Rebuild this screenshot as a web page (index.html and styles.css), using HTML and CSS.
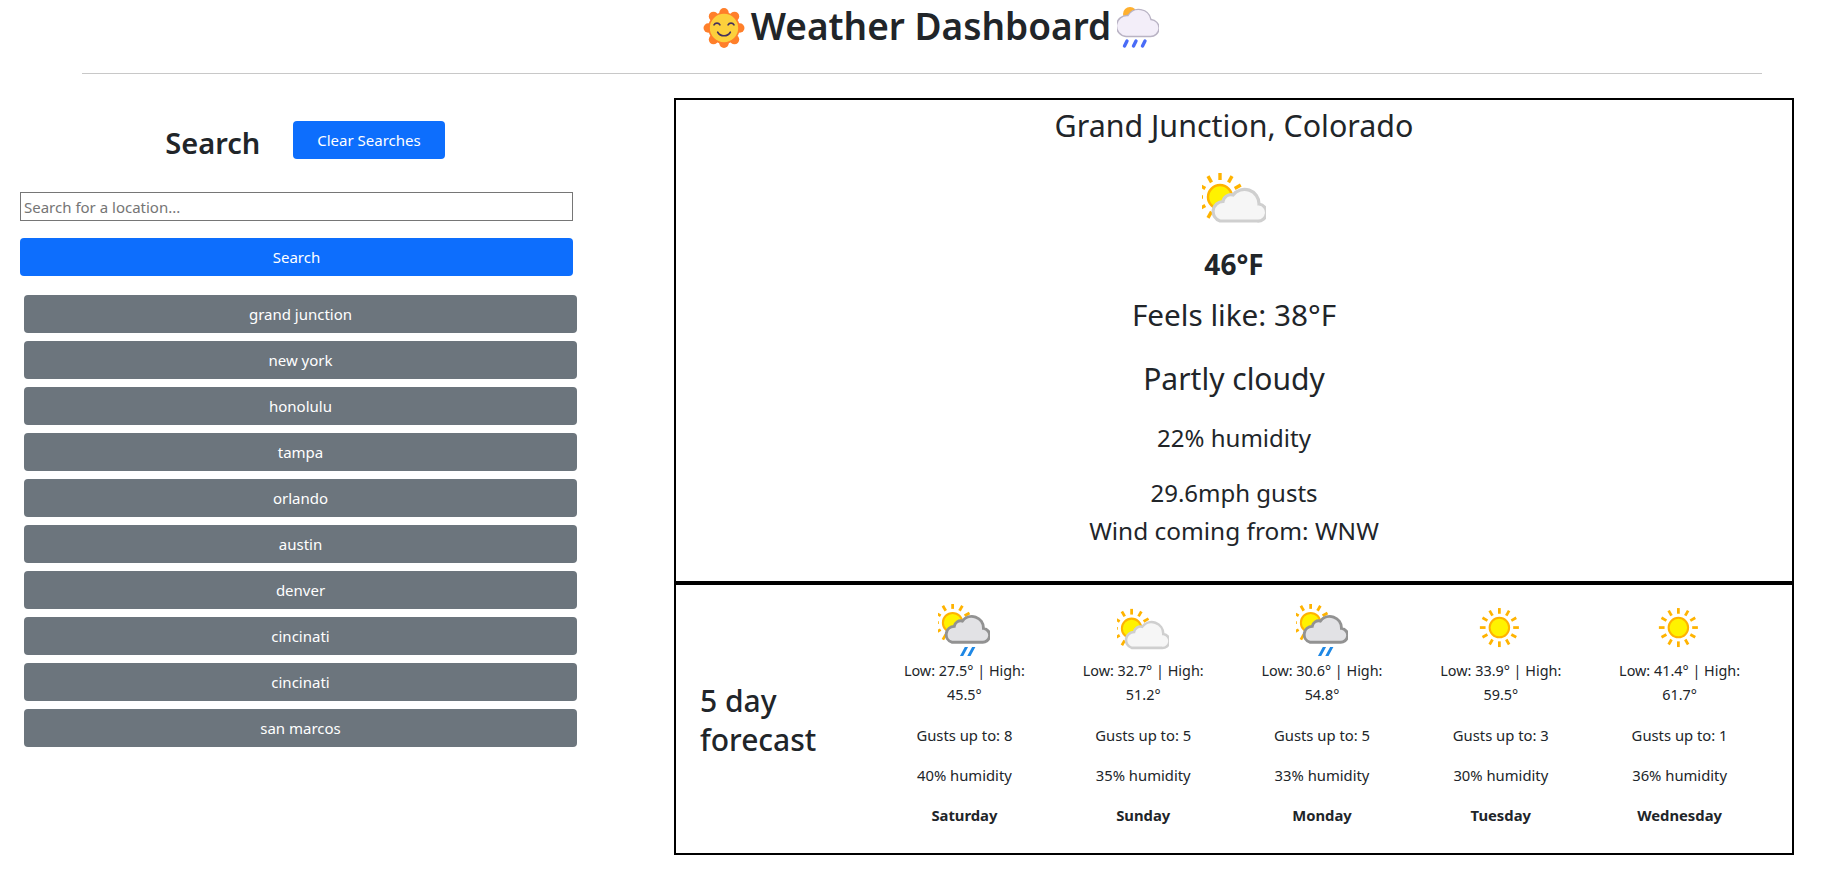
FILE: index.html
```html
<!DOCTYPE html>
<html lang="en">
<head>
	<meta charset="UTF-8">
	<title>Weather Dashboard</title>
	<link rel="stylesheet" href="styles.css">
</head>
<body>
	<!-- icons used more than once -->
	<svg class="defs" width="0" height="0">
		<defs>
			<g id="rays" stroke="#ffb300" stroke-width="3.4" stroke-linecap="butt">
				<line x1="0" y1="-17" x2="0" y2="-24"/>
				<line x1="0" y1="-17" x2="0" y2="-24" transform="rotate(30)"/>
				<line x1="0" y1="-17" x2="0" y2="-24" transform="rotate(60)"/>
				<line x1="0" y1="-17" x2="0" y2="-24" transform="rotate(90)"/>
				<line x1="0" y1="-17" x2="0" y2="-24" transform="rotate(120)"/>
				<line x1="0" y1="-17" x2="0" y2="-24" transform="rotate(150)"/>
				<line x1="0" y1="-17" x2="0" y2="-24" transform="rotate(180)"/>
				<line x1="0" y1="-17" x2="0" y2="-24" transform="rotate(210)"/>
				<line x1="0" y1="-17" x2="0" y2="-24" transform="rotate(240)"/>
				<line x1="0" y1="-17" x2="0" y2="-24" transform="rotate(270)"/>
				<line x1="0" y1="-17" x2="0" y2="-24" transform="rotate(300)"/>
				<line x1="0" y1="-17" x2="0" y2="-24" transform="rotate(330)"/>
				<circle r="12" fill="#fff200" stroke-width="2.5"/>
			</g>
			<path id="cloud" d="M17 53H54a8.500 8.500 0 0 0 2-17a14.500 14.500 0 0 0-26-9a8 8 0 0 0-10 6.500a10 10 0 0 0-3 19.500z"/>
			<symbol id="partly" viewBox="0 0 64 64" overflow="visible">
				<use href="#rays" x="18" y="30"/>
				<use href="#cloud" x="1" y="1" fill="#f6f6f6" stroke="#cfcfcf" stroke-width="3.2"/>
			</symbol>
			<symbol id="rain" viewBox="0 0 64 64" overflow="visible">
				<use href="#rays" x="18" y="23"/>
				<use href="#cloud" y="-6" fill="#e2e2e5" stroke="#929292" stroke-width="3.6"/>
				<path d="M27 64l6-11h4l-6 11zM36 64l6-11h4l-6 11z" fill="#1e88e5"/>
			</symbol>
			<symbol id="sunny" viewBox="0 0 64 64" overflow="visible">
				<use href="#rays" x="30" y="29"/>
			</symbol>
		</defs>
	</svg>

	<header class="top">
		<h1 class="title">
			<svg class="emoji" viewBox="0 0 40 40">
				<g fill="#ff7f2a">
					<circle cx="20" cy="5.5" r="4.5"/><circle cx="30" cy="9" r="4.5"/><circle cx="35" cy="20" r="4.5"/><circle cx="30" cy="31" r="4.5"/>
					<circle cx="20" cy="34.5" r="4.5"/><circle cx="10" cy="31" r="4.5"/><circle cx="5" cy="20" r="4.5"/><circle cx="10" cy="9" r="4.5"/>
					<circle cx="20" cy="20" r="15"/>
				</g>
				<circle cx="20" cy="20" r="13.5" fill="#fcd03c"/>
				<g fill="none" stroke="#43305c" stroke-width="1.6" stroke-linecap="round">
					<path d="M10.5 17a3.2 3.2 0 0 1 5.6 0"/>
					<path d="M23.9 17a3.2 3.2 0 0 1 5.6 0"/>
					<path d="M14 24a7 7 0 0 0 12 0"/>
				</g>
			</svg>
			<span>Weather Dashboard</span>
			<svg class="emoji" viewBox="0 0 42 42">
				<circle cx="13" cy="7" r="7" fill="#ffb02e"/>
				<path d="M9 29.500H33a8.500 8.500 0 0 0 1-17a12.500 12.500 0 0 0-23-4a10.500 10.500 0 0 0-2 21z" fill="#f3eef9" stroke="#b9b3c4" stroke-width="1.400"/>
				<path d="M10 34l-2.500 5M19 34l-2.500 5M28 34l-2.500 5" stroke="#4a6cf7" stroke-width="3.400" stroke-linecap="round"/>
			</svg>
		</h1>
		<hr class="rule">
	</header>

	<div class="main">
		<aside class="side">
			<div class="side-head">
				<h2>Search</h2>
				<button class="btn">Clear Searches</button>
			</div>
			<input class="search-input" type="text" placeholder="Search for a location...">
			<button class="btn search-btn">Search</button>
			<div class="history">
				<button class="btn grey">grand junction</button>
				<button class="btn grey">new york</button>
				<button class="btn grey">honolulu</button>
				<button class="btn grey">tampa</button>
				<button class="btn grey">orlando</button>
				<button class="btn grey">austin</button>
				<button class="btn grey">denver</button>
				<button class="btn grey">cincinati</button>
				<button class="btn grey">cincinati</button>
				<button class="btn grey">san marcos</button>
			</div>
		</aside>

		<section class="panels">
			<div class="current">
				<div class="city">Grand Junction, Colorado</div>
				<svg class="now-icon"><use href="#partly"/></svg>
				<div class="temp">46°F</div>
				<div class="feels">Feels like: 38°F</div>
				<div class="cond">Partly cloudy</div>
				<div class="hum">22% humidity</div>
				<div class="gust">29.6mph gusts</div>
				<div class="wind">Wind coming from: WNW</div>
			</div>
			<div class="forecast">
				<h2 class="five">5 day forecast</h2>
				<div class="days">
					<div class="day">
						<svg class="day-icon"><use href="#rain"/></svg>
						<p class="temps">Low: 27.5° | High:<br>45.5°</p>
						<p>Gusts up to: 8</p>
						<p>40% humidity</p>
						<p class="name">Saturday</p>
					</div>
					<div class="day">
						<svg class="day-icon"><use href="#partly"/></svg>
						<p class="temps">Low: 32.7° | High:<br>51.2°</p>
						<p>Gusts up to: 5</p>
						<p>35% humidity</p>
						<p class="name">Sunday</p>
					</div>
					<div class="day">
						<svg class="day-icon"><use href="#rain"/></svg>
						<p class="temps">Low: 30.6° | High:<br>54.8°</p>
						<p>Gusts up to: 5</p>
						<p>33% humidity</p>
						<p class="name">Monday</p>
					</div>
					<div class="day">
						<svg class="day-icon"><use href="#sunny"/></svg>
						<p class="temps">Low: 33.9° | High:<br>59.5°</p>
						<p>Gusts up to: 3</p>
						<p>30% humidity</p>
						<p class="name">Tuesday</p>
					</div>
					<div class="day">
						<svg class="day-icon"><use href="#sunny"/></svg>
						<p class="temps">Low: 41.4° | High:<br>61.7°</p>
						<p>Gusts up to: 1</p>
						<p>36% humidity</p>
						<p class="name">Wednesday</p>
					</div>
				</div>
			</div>
		</section>
	</div>
</body>
</html>
```

FILE: styles.css
```css
body {
	margin: 0;
	background-color: #fff;
	color: #212529;
	font-family: "Noto Sans", "Open Sans", sans-serif;
	font-size: 15px;
	line-height: 24px;
}
.defs {
	display: block;
	height: 0;
}
.top {
	padding: 0 84px 0 82px;
}
.title {
	display: flex;
	justify-content: center;
	align-items: center;
	gap: 6px;
	margin: 0;
	padding-left: 18px;
	height: 52px;
	font-size: 37px;
	font-weight: 600;
	line-height: 52px;
}
.emoji {
	width: 42px;
	height: 42px;
	margin-top: 4px;
}
.rule {
	margin: 21px 0 0 0;
	border: 0;
	border-top: 1px solid #c8c8c8;
}
.main {
	display: flex;
	padding: 24px 52px 0 20px;
}
.side {
	width: 557px;
	flex: none;
}
.side-head {
	display: flex;
	justify-content: center;
	align-items: center;
	gap: 33px;
	height: 40px;
	margin-top: 22px;
	padding-left: 13px;
}
.side-head h2 {
	margin: 0;
	padding-top: 5px;
	font-size: 29px;
	font-weight: 600;
}
.btn {
	height: 38px;
	padding: 0 24px;
	border: 0;
	border-radius: 4px;
	background-color: #0d6efd;
	color: #fff;
	font-family: inherit;
	font-size: 15px;
}
.search-input {
	display: block;
	box-sizing: border-box;
	width: 553px;
	height: 29px;
	margin: 32px 0 0 0;
	padding: 0 3px;
	border: 1px solid #767676;
	font-family: inherit;
	font-size: 15px;
}
.search-btn {
	display: block;
	width: 553px;
	margin-top: 17px;
}
.history {
	display: flex;
	flex-direction: column;
	gap: 8px;
	margin: 19px 0 0 4px;
}
.grey {
	width: 553px;
	background-color: #6c757d;
}
.panels {
	flex: 1;
	margin-left: 97px;
}
.current {
	border: 2px solid #000;
	height: 481px;
	text-align: center;
}
.city {
	margin-top: 7px;
	font-size: 30.4px;
	line-height: 38px;
}
.now-icon {
	display: block;
	width: 64px;
	height: 64px;
	margin: 22px auto 0 auto;
}
.temp {
	margin-top: 14px;
	font-size: 28px;
	font-weight: 700;
	line-height: 38px;
}
.feels {
	margin-top: 13px;
	font-size: 29.7px;
	line-height: 38px;
}
.cond {
	margin-top: 26px;
	font-size: 30px;
	line-height: 38px;
}
.hum {
	margin-top: 22px;
	font-size: 24px;
	line-height: 36px;
}
.gust {
	margin-top: 19px;
	font-size: 24px;
	line-height: 36px;
}
.wind {
	margin-top: 2px;
	font-size: 24.4px;
	line-height: 36px;
}
.forecast {
	display: flex;
	border: 2px solid #000;
	height: 268px;
	align-items: center;
}
.five {
	width: 150px;
	margin: 2px 0 0 24px;
	flex: none;
	font-size: 30px;
	font-weight: 500;
	line-height: 39px;
}
.days {
	display: flex;
	flex: 1;
	margin: 0 23px 0 25px;
	height: 100%;
}
.day {
	flex: 1;
	text-align: center;
	padding-top: 19px;
}
.day p {
	margin: 16px 0 0 0;
	font-size: 14.8px;
}
.day-icon {
	display: block;
	width: 52px;
	height: 52px;
	margin: 0 auto;
}
.day .temps {
	margin-top: 3px;
	font-size: 14.4px;
}
.day .name {
	font-weight: 700;
}
```
